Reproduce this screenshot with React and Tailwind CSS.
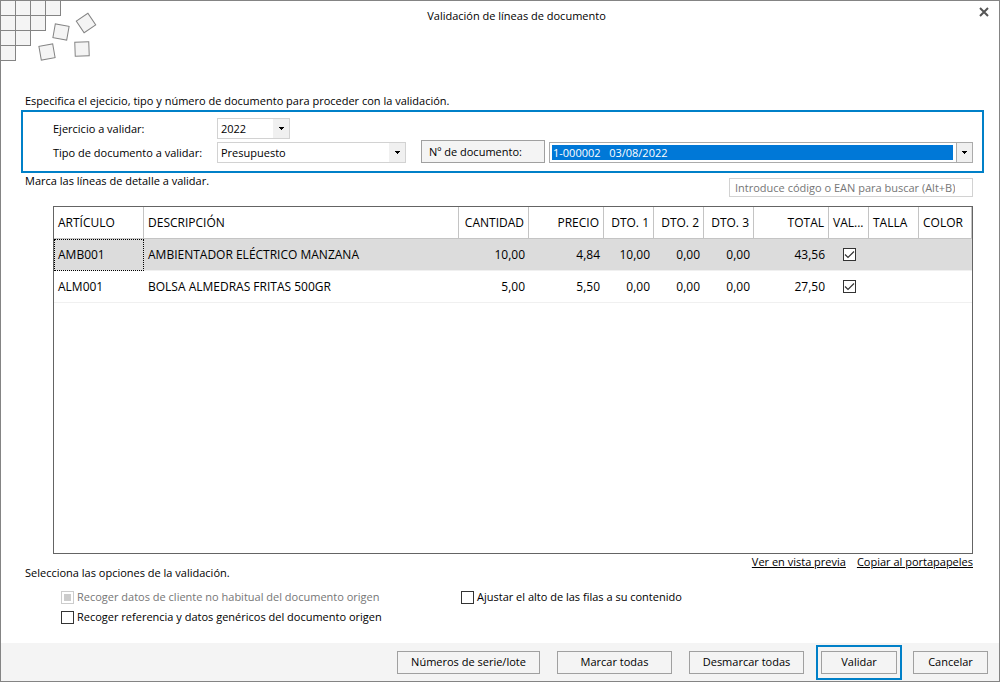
import React, { useState } from 'react'

const columns = [
  { key: 'articulo', label: 'ARTÍCULO', width: 'w-[90px]' },
  { key: 'descripcion', label: 'DESCRIPCIÓN', width: '' },
  { key: 'cantidad', label: 'CANTIDAD', width: 'w-[70px]', right: true },
  { key: 'precio', label: 'PRECIO', width: 'w-[75px]', right: true },
  { key: 'dto1', label: 'DTO. 1', width: 'w-[50px]', right: true },
  { key: 'dto2', label: 'DTO. 2', width: 'w-[50px]', right: true },
  { key: 'dto3', label: 'DTO. 3', width: 'w-[50px]', right: true },
  { key: 'total', label: 'TOTAL', width: 'w-[75px]', right: true },
  { key: 'validar', label: 'VAL...', width: 'w-[40px]' },
  { key: 'talla', label: 'TALLA', width: 'w-[50px]' },
  { key: 'color', label: 'COLOR', width: 'w-[53px]' },
]

const initialLines = [
  { articulo: 'AMB001', descripcion: 'AMBIENTADOR ELÉCTRICO MANZANA', cantidad: '10,00', precio: '4,84', dto1: '10,00', dto2: '0,00', dto3: '0,00', total: '43,56', validar: true },
  { articulo: 'ALM001', descripcion: 'BOLSA ALMEDRAS FRITAS 500GR', cantidad: '5,00', precio: '5,50', dto1: '0,00', dto2: '0,00', dto3: '0,00', total: '27,50', validar: true },
]

function Tiles() {
  return (
    <svg width="100" height="66" viewBox="0 0 100 66" fill="#f4f4f4" stroke="#848484" className="block shrink-0" aria-hidden="true">
      <g shapeRendering="crispEdges">
        {[4, 3, 2, 1].map((count, row) =>
          Array.from({ length: count }, (_, col) => (
            <rect key={`${row}-${col}`} x={col * 15 - 0.5} y={row * 15 - 0.5} width="15" height="15" />
          ))
        )}
      </g>
      <rect x="-7" y="-7" width="14" height="14" transform="translate(60 31) rotate(10)" />
      <rect x="-7" y="-7" width="14" height="14" transform="translate(85 22) rotate(-34)" />
      <rect x="-7" y="-7" width="14" height="14" transform="translate(46 51) rotate(-10)" />
      <rect x="-7" y="-7" width="14" height="14" transform="translate(81 48) rotate(-2)" />
    </svg>
  )
}

function Combo({ id, label, options, className, active }) {
  return (
    <div className={`flex h-[21px] border bg-white ${active ? 'border-[#ababab]' : 'border-[#d2d2d2]'} ${className}`}>
      <select id={id} aria-label={label}
        className={`min-w-0 flex-1 appearance-none outline-none ${active ? 'm-0.5 mr-[3px] whitespace-pre bg-[#0078d7] pl-px text-white' : 'pl-[3px]'}`}>
        {options.map(o => <option key={o}>{o}</option>)}
      </select>
      <span className={`flex w-4 shrink-0 items-center justify-center bg-[#f0f0f0] ${active ? 'border-l border-[#ababab]' : ''}`}>
        <svg width="5" height="3" viewBox="0 0 5 3" shapeRendering="crispEdges"><path d="M0 0h5v1H4v1H3v1H2V2H1V1H0z" /></svg>
      </span>
    </div>
  )
}

function Check({ className = '', ...props }) {
  return (
    <span className={`grid w-[13px] shrink-0 ${className}`}>
      <input type="checkbox" {...props}
        className="peer col-start-1 row-start-1 size-[13px] appearance-none border border-[#333] bg-white disabled:border-[#ccc]" />
      <svg width="13" height="13" viewBox="0 0 13 13" fill="none" stroke="#333" strokeWidth="1.2"
        className="pointer-events-none invisible col-start-1 row-start-1 peer-checked:visible peer-disabled:hidden">
        <path d="M2 6.5 5 9.5 11 3.5" />
      </svg>
      <span className="pointer-events-none col-start-1 row-start-1 m-[3px] hidden size-[7px] bg-[#ccc] peer-disabled:block" />
    </span>
  )
}

function Button({ className = '', children, ...props }) {
  return (
    <button type="button" {...props} className={`h-[23px] border border-[#a0a0a0] bg-[#f4f4f4] ${className}`}>
      {children}
    </button>
  )
}

export default function App() {
  const [lines, setLines] = useState(initialLines)
  const [reference, setReference] = useState(false)
  const [fitRows, setFitRows] = useState(false)

  const markAll = value => setLines(lines.map(l => ({ ...l, validar: value })))
  const toggle = index => setLines(lines.map((l, i) => (i === index ? { ...l, validar: !l.validar } : l)))

  return (
    <main className="flex min-h-screen flex-col border border-[#848484] bg-white font-['Open_Sans','Noto_Sans',sans-serif] text-[11px] leading-4 text-black">
      <header className="flex h-[92px] items-start">
        <Tiles />
        <h1 className="flex-1 pt-[7px] pr-[34px] text-center">Validación de líneas de documento</h1>
        <button type="button" aria-label="Cerrar" className="mt-[5px] mr-[9px] ml-3 p-px">
          <svg width="10" height="10" viewBox="0 0 10 10" stroke="#555" strokeWidth="2" className="block"><path d="M1 1l8 8M9 1l-8 8" /></svg>
        </button>
      </header>

      <p className="pl-6">Especifica el ejecicio, tipo y número de documento para proceder con la validación.</p>
      <section className="mt-px mr-[15px] ml-5 flex flex-col border-2 border-[#0080c8] pt-1.5 pr-[9px] pb-2 pl-[30px]">
        <div className="flex items-center">
          <label htmlFor="ejercicio" className="w-[164px]">Ejercicio a validar:</label>
          <Combo id="ejercicio" options={['2022']} className="w-[73px]" />
        </div>
        <div className="mt-px flex items-end">
          <label htmlFor="tipo" className="w-[164px] pb-0.5">Tipo de documento a validar:</label>
          <Combo id="tipo" options={['Presupuesto']} className="w-[189px]" />
          <Button className="ml-[15px] w-[124px] pl-[7px] text-left">Nº de documento:</Button>
          <Combo id="documento" label="Nº de documento" options={['1-000002\u00a0\u00a0\u00a003/08/2022']} active className="ml-1 min-w-0 flex-1" />
        </div>
      </section>

      <div className="mr-[26px] ml-6 flex h-[33px] items-start justify-between">
        <p>Marca las líneas de detalle a validar.</p>
        <input type="search" aria-label="Buscar artículo" placeholder="Introduce código o EAN para buscar (Alt+B)"
          className="mt-[5px] h-[19px] w-[244px] border border-[#d2d2d2] px-[5px] outline-none placeholder:text-[#767676]" />
      </div>

      <div className="mr-[26px] ml-[52px] flex-1 border border-[#646464]">
        <table className="w-full table-fixed border-separate border-spacing-0 text-[12px]">
          <colgroup>
            {columns.map(c => <col key={c.key} className={c.width} />)}
          </colgroup>
          <thead>
            <tr className="h-8">
              {columns.map(c => (
                <th key={c.key} scope="col"
                  className={`border-r border-b border-[#c4c4c4] px-1 font-normal whitespace-nowrap ${c.right ? 'text-right' : 'text-left'}`}>
                  {c.label}
                </th>
              ))}
            </tr>
          </thead>
          <tbody>
            {lines.map((line, i) => (
              <tr key={line.articulo} className={`h-8 ${i === 0 ? 'bg-[#dcdcdc]' : ''}`}>
                {columns.map((c, j) => (
                  <td key={c.key}
                    className={`border-b border-[#f0f0f0] px-1 whitespace-nowrap ${c.right ? 'text-right' : ''} ${i === 0 && j === 0 ? 'outline outline-dotted -outline-offset-1 outline-black' : ''}`}>
                    {c.key === 'validar'
                      ? <Check className="ml-2.5" aria-label={`Validar ${line.articulo}`} checked={line.validar} onChange={() => toggle(i)} />
                      : line[c.key]}
                  </td>
                ))}
              </tr>
            ))}
          </tbody>
        </table>
      </div>

      <nav className="mr-[26px] flex h-[11px] justify-end gap-[11px]">
        <a href="#vista-previa" className="underline">Ver en vista previa</a>
        <a href="#portapapeles" className="underline">Copiar al portapapeles</a>
      </nav>
      <p className="pl-6">Selecciona las opciones de la validación.</p>
      <div className="mt-2 mb-[18px] ml-[60px] grid grid-cols-[400px_1fr] gap-y-1">
        <label className="flex items-center gap-[3px] text-[#767676]">
          <Check disabled />
          Recoger datos de cliente no habitual del documento origen
        </label>
        <label className="flex items-center gap-[3px]">
          <Check checked={fitRows} onChange={e => setFitRows(e.target.checked)} />
          Ajustar el alto de las filas a su contenido
        </label>
        <label className="flex items-center gap-[3px]">
          <Check checked={reference} onChange={e => setReference(e.target.checked)} />
          Recoger referencia y datos genéricos del documento origen
        </label>
      </div>

      <footer className="flex h-[38px] items-center justify-end bg-[#f4f4f4] pr-[11px]">
        <Button className="w-[143px]">Números de serie/lote</Button>
        <Button className="ml-[17px] w-[115px]" onClick={() => markAll(true)}>Marcar todas</Button>
        <Button className="ml-[17px] w-[115px]" onClick={() => markAll(false)}>Desmarcar todas</Button>
        <div className="mx-[11px] ml-3 border-2 border-[#0080c8] px-[3px] py-1">
          <Button className="block w-[76px]">Validar</Button>
        </div>
        <Button className="w-[75px]">Cancelar</Button>
      </footer>
    </main>
  )
}
